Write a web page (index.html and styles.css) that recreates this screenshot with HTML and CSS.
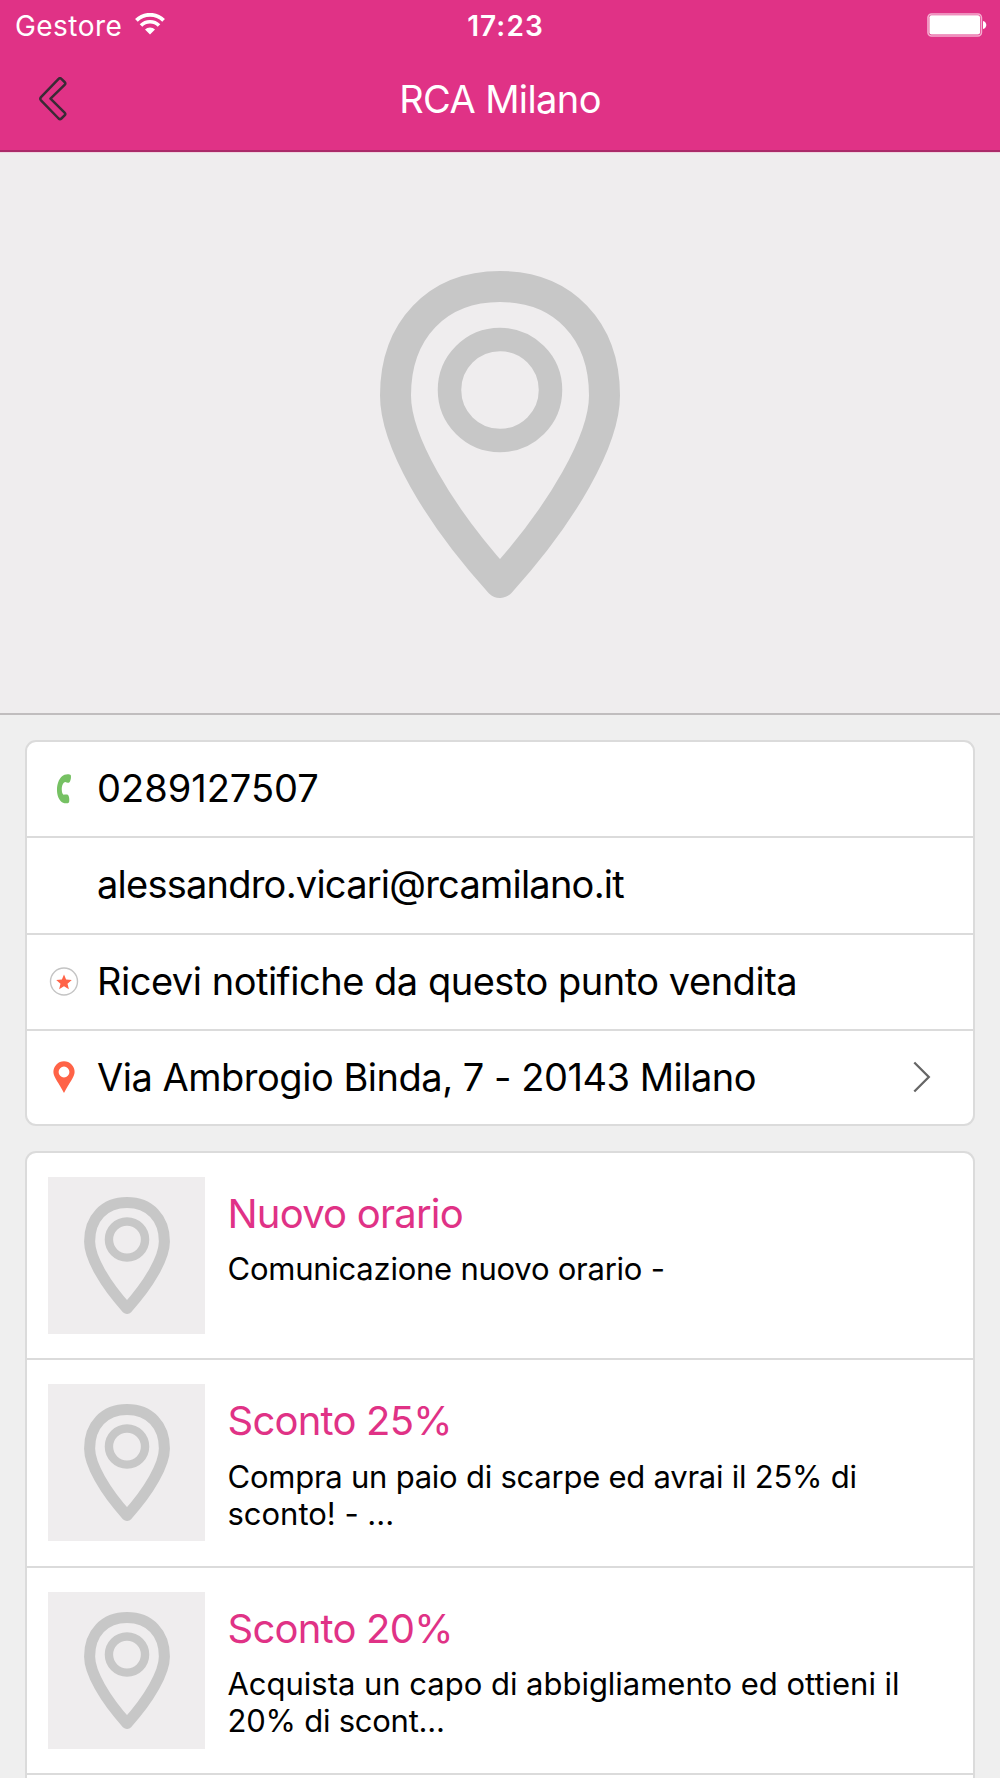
FILE: index.html
```html
<!DOCTYPE html>
<html lang="it">
<head>
  <meta charset="UTF-8">
  <meta name="viewport" content="width=device-width, initial-scale=1.0">
  <title>RCA Milano</title>
  <link rel="stylesheet" href="styles.css">
</head>
<body>

<svg class="sprite" aria-hidden="true">
  <symbol id="pin" viewBox="380 271 240 327">
    <path d="M500 286.5C563 286.5 604.5 330 604.5 395.5C604.5 440 563 513 500 582.5C437 513 395.5 440 395.5 395.5C395.5 330 437 286.5 500 286.5Z" fill="none" stroke="#c7c7c7" stroke-width="31" stroke-linejoin="round"/>
    <circle cx="500" cy="390" r="50.5" fill="none" stroke="#c7c7c7" stroke-width="23.5"/>
  </symbol>
</svg>

<div class="page">
  <header class="header">
    <div class="status-bar">
      <div class="carrier">
        <span class="carrier-name">Gestore</span>
        <svg class="wifi" viewBox="0 0 30 22">
          <path d="M15 21.5L10 16.6A7 7 0 0 1 20 16.6Z" fill="#fff"/>
          <path d="M6 12.6A12.6 12.6 0 0 1 24 12.6" fill="none" stroke="#fff" stroke-width="3.6"/>
          <path d="M1.4 7.4A19.2 19.2 0 0 1 28.6 7.4" fill="none" stroke="#fff" stroke-width="3.8"/>
        </svg>
      </div>
      <span class="clock">17:23</span>
      <div class="battery-wrap">
        <svg class="battery" viewBox="0 0 60 25">
          <rect x="1" y="1" width="53.4" height="22" rx="3.5" fill="none" stroke="#f4aed0" stroke-width="1.6"/>
          <rect x="2.4" y="2.2" width="50.6" height="19.4" rx="2" fill="#fff"/>
          <path d="M56 8C60.4 8.6 60.4 15.4 56 16Z" fill="#fff"/>
        </svg>
      </div>
    </div>
    <div class="nav-bar">
      <a class="back" href="#">
        <svg viewBox="0 0 28 44">
          <path d="M19.6 1.9Q21 .6 22.4 1.9L25.6 5Q27 6.4 25.6 7.8L11.5 21.7L25.6 35.6Q27 37 25.6 38.4L22.4 41.5Q21 42.8 19.6 41.5L2 23.3Q.6 21.7 2 20.1Z" fill="none" stroke="#3a2a35" stroke-width="2.5" stroke-linejoin="round"/>
        </svg>
      </a>
      <h1 class="title">RCA Milano</h1>
    </div>
  </header>

  <div class="hero">
    <svg class="hero-pin"><use href="#pin"/></svg>
  </div>

  <main class="content">
    <ul class="card contacts">
      <li class="row">
        <span class="row-icon">
          <svg width="16" height="30" viewBox="0 0 16 30">
            <path d="M8.5 .8C11 -.1 14 .2 14.8 1.2C15.3 3.5 14.7 6.5 13.5 8.2C12.3 9.2 10.6 8.6 9.4 8.1C5.5 8.5 4.5 18.5 7.6 20.8C9 20.5 11 20.2 12.1 21C13.3 22.5 13.6 26 13 28.5C11.8 29.6 9 29.5 7 28.8C-1.5 25 -1 4.5 8.5 .8Z" fill="#76c163"/>
          </svg>
        </span>
        <span class="row-text phone">0289127507</span>
      </li>
      <li class="row">
        <span class="row-icon"></span>
        <span class="row-text email">alessandro.vicari@rcamilano.it</span>
      </li>
      <li class="row">
        <span class="row-icon">
          <svg width="30" height="30" viewBox="0 0 30 30">
            <circle cx="15" cy="14.5" r="13.5" fill="#fff" stroke="#c4c4c4" stroke-width="1.4"/>
            <path d="M15 7.6L17.1 12.6L22.8 13L18.5 16.7L19.9 22.2L15 19.3L10.1 22.2L11.5 16.7L7.2 13L12.9 12.6Z" fill="#ff6347"/>
          </svg>
        </span>
        <span class="row-text">Ricevi notifiche da questo punto vendita</span>
      </li>
      <li class="row">
        <span class="row-icon">
          <svg width="22" height="32" viewBox="0 0 22 32">
            <path fill-rule="evenodd" d="M11 .3A10.6 10.6 0 0 1 21.6 11C21.6 16 16 22 11 32C6 22 .4 16 .4 11A10.6 10.6 0 0 1 11 .3ZM11 5.6A5.4 5.4 0 1 0 11 16.4A5.4 5.4 0 1 0 11 5.6Z" fill="#ff6347"/>
          </svg>
        </span>
        <span class="row-text address">Via Ambrogio Binda, 7 - 20143 Milano</span>
        <svg class="chevron" width="18" height="32" viewBox="0 0 18 32">
          <path d="M1.3 1.5L15.8 16L1.3 30.5" fill="none" stroke="#666" stroke-width="2.3"/>
        </svg>
      </li>
    </ul>

    <ul class="card news">
      <li class="news-item">
        <div class="thumb"><svg class="thumb-pin"><use href="#pin"/></svg></div>
        <div class="news-body">
          <h2>Nuovo orario</h2>
          <p>Comunicazione nuovo orario -</p>
        </div>
      </li>
      <li class="news-item">
        <div class="thumb"><svg class="thumb-pin"><use href="#pin"/></svg></div>
        <div class="news-body">
          <h2>Sconto 25%</h2>
          <p>Compra un paio di scarpe ed avrai il 25% di<br><span class="loose">sconto! - ...</span></p>
        </div>
      </li>
      <li class="news-item">
        <div class="thumb"><svg class="thumb-pin"><use href="#pin"/></svg></div>
        <div class="news-body">
          <h2>Sconto 20%</h2>
          <p><span class="loose">Acquista un capo di abbigliamento ed ottieni il</span><br>20% di scont...</p>
        </div>
      </li>
    </ul>
  </main>
</div>

</body>
</html>
```
FILE: styles.css
```css
* {
  box-sizing: border-box;
}

body {
  margin: 0;
  background: #efefef;
  color: #000;
  font-family: Inter, "Liberation Sans", sans-serif;
}

.sprite {
  display: none;
}

ul {
  list-style: none;
  margin: 0;
  padding: 0;
}

.page {
  display: flex;
  flex-direction: column;
  height: 1778px;
  overflow: hidden;
}

.header {
  flex-shrink: 0;
  height: 152px;
  background: #e03286;
  color: #fff;
  border-bottom: 2px solid #ab2a69;
}

.status-bar {
  display: grid;
  grid-template-columns: 1fr auto 1fr;
  align-items: center;
  height: 50px;
  padding: 0 13px 0 15px;
  font-size: 28px;
}

.carrier {
  display: flex;
  align-items: center;
  gap: 13px;
}

.carrier-name {
  padding-top: 1px;
  letter-spacing: 0.45px;
}

.wifi {
  width: 30px;
  height: 22px;
  margin-bottom: 3px;
}

.clock {
  padding: 1px 0 0 9px;
  font-weight: 600;
  letter-spacing: 1.1px;
}

.battery-wrap {
  display: flex;
  justify-content: flex-end;
}

.battery {
  width: 60px;
  height: 25px;
}

.nav-bar {
  display: grid;
  grid-template-columns: 100px 1fr 100px;
  align-items: center;
  height: 98px;
}

.back {
  padding-left: 39px;
}

.back svg {
  display: block;
  width: 28px;
  height: 44px;
}

.title {
  margin: 0;
  font-size: 38px;
  font-weight: 400;
  letter-spacing: -0.6px;
  text-align: center;
}

.hero {
  display: flex;
  flex-shrink: 0;
  justify-content: center;
  height: 563px;
  padding-top: 118px;
  background: #efedee;
  border-top: 1px solid #efd5e0;
  border-bottom: 2px solid #c0bdbe;
}

.hero-pin {
  width: 240px;
  height: 327px;
}

.content {
  display: flex;
  flex: 1;
  flex-direction: column;
  gap: 25px;
  padding: 24.5px 25px 0;
}

.card {
  background: #fff;
  border: 2px solid #dbdbdb;
  border-radius: 11px;
}

.row {
  display: flex;
  align-items: center;
  height: 96.6px;
  padding: 0 42px 0 21px;
  border-bottom: 2px solid #dbdbdb;
}

.row:last-child {
  height: 92.4px;
  border-bottom: none;
}

.row-icon {
  display: flex;
  justify-content: center;
  width: 32px;
}

.row-text {
  margin-left: 17px;
  padding-bottom: 2px;
  font-size: 38px;
  letter-spacing: -0.48px;
  white-space: nowrap;
}

.phone {
  letter-spacing: 0;
}

.email {
  letter-spacing: -0.77px;
}

.address {
  padding-bottom: 0;
}

.chevron {
  margin-left: auto;
}

.news {
  flex: 1;
  border-bottom: none;
  border-radius: 11px 11px 0 0;
}

.news-item {
  display: flex;
  height: 207.6px;
  padding: 24px 21px;
  border-bottom: 2px solid #dbdbdb;
}

.thumb {
  display: flex;
  flex-shrink: 0;
  justify-content: center;
  width: 157px;
  height: 157px;
  padding-top: 20px;
  background: #efedee;
}

.thumb-pin {
  width: 86px;
  height: 117px;
}

.news-body {
  margin-left: 22.5px;
  padding-top: 13px;
}

.news-body h2 {
  margin: 0;
  color: #e03286;
  font-size: 40px;
  font-weight: 400;
  line-height: 48px;
  letter-spacing: -0.78px;
}

.news-body p {
  margin: 12.5px 0 0;
  font-size: 31px;
  line-height: 37px;
  letter-spacing: -0.24px;
  white-space: nowrap;
}

.news-body .loose {
  letter-spacing: -0.02px;
}
```
